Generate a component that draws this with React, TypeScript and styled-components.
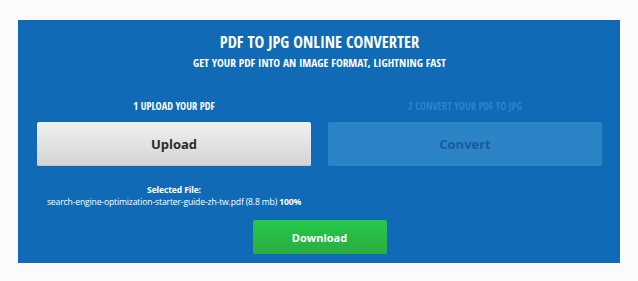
import React from "react";
import styled, { createGlobalStyle } from "styled-components";

const Global = createGlobalStyle`
  html, body { margin: 0; padding: 0; background: #fbfbfb; }
  body { font-family: "Open Sans", "Liberation Sans", sans-serif; }
`;

const Page = styled.div`
  padding: 20px 18px 18px;
`;

const Panel = styled.section`
  background: #106ab5;
  height: 243px;
  box-sizing: border-box;
  padding: 12px 18px 0 19px;
  display: flex;
  flex-direction: column;
  align-items: center;
  color: #fff;
`;

const condensed = `
  font-family: "Open Sans Condensed", "Liberation Sans Narrow", "Open Sans", sans-serif;
  font-stretch: 75%;
  font-weight: 700;
  text-transform: uppercase;
`;

const Title = styled.h1`
  ${condensed}
  margin: 0;
  font-size: 16.4px;
  line-height: 20px;
`;

const Subtitle = styled.h2`
  ${condensed}
  margin: 4px 0 0;
  font-size: 11.4px;
  line-height: 14px;
`;

const Steps = styled.div`
  align-self: stretch;
  display: grid;
  grid-template-columns: 1fr 1fr;
  column-gap: 17px;
  row-gap: 9px;
  margin-top: 30px;
`;

const StepLabel = styled.div<{ $dim?: boolean }>`
  ${condensed}
  font-size: 10.3px;
  line-height: 13px;
  text-align: center;
  color: ${(p) => (p.$dim ? "#2c84cc" : "#ffffff")};
`;

const UploadButton = styled.button`
  height: 44px;
  border: none;
  border-radius: 2px;
  background: linear-gradient(#f1f1f1, #d3d3d3);
  box-shadow: inset 0 -1px 0 #c4c4c4;
  font-family: "Open Sans", sans-serif;
  font-weight: 700;
  font-size: 13px;
  color: #2a2a2a;
  padding: 0;
`;

const ConvertButton = styled.button`
  height: 44px;
  border: none;
  border-radius: 2px;
  background: #2c83c6;
  font-family: "Open Sans", sans-serif;
  font-weight: 700;
  font-size: 13px;
  color: #1b5c9b;
  padding: 0;
`;

const FileInfo = styled.div`
  margin-top: 9px;
  text-align: center;
  font-size: 8.6px;
  line-height: 12px;
  color: #fff;
  letter-spacing: -0.15px;
  white-space: nowrap;
`;

const FileLabel = styled.div`
  font-weight: 700;
`;

const Strong = styled.b`
  font-weight: 700;
`;

const DownloadButton = styled.button`
  margin-top: 12px;
  width: 134px;
  height: 34px;
  border: none;
  border-radius: 2px;
  background: linear-gradient(#24c94d, #2aac3e);
  font-family: "Open Sans", sans-serif;
  font-weight: 700;
  font-size: 11px;
  color: #fff;
  padding: 0;
`;

export default function App() {
  return (
    <>
      <Global />
      <Page>
        <Panel>
          <Title>PDF to JPG Online Converter</Title>
          <Subtitle>Get your PDF into an image format, lightning fast</Subtitle>
          <Steps>
            <StepLabel>1 Upload your PDF</StepLabel>
            <StepLabel $dim>2 Convert your PDF to JPG</StepLabel>
            <UploadButton>Upload</UploadButton>
            <ConvertButton>Convert</ConvertButton>
            <FileInfo>
              <FileLabel>Selected File:</FileLabel>
              search-engine-optimization-starter-guide-zh-tw.pdf (8.8 mb) <Strong>100%</Strong>
            </FileInfo>
          </Steps>
          <DownloadButton>Download</DownloadButton>
        </Panel>
      </Page>
    </>
  );
}
